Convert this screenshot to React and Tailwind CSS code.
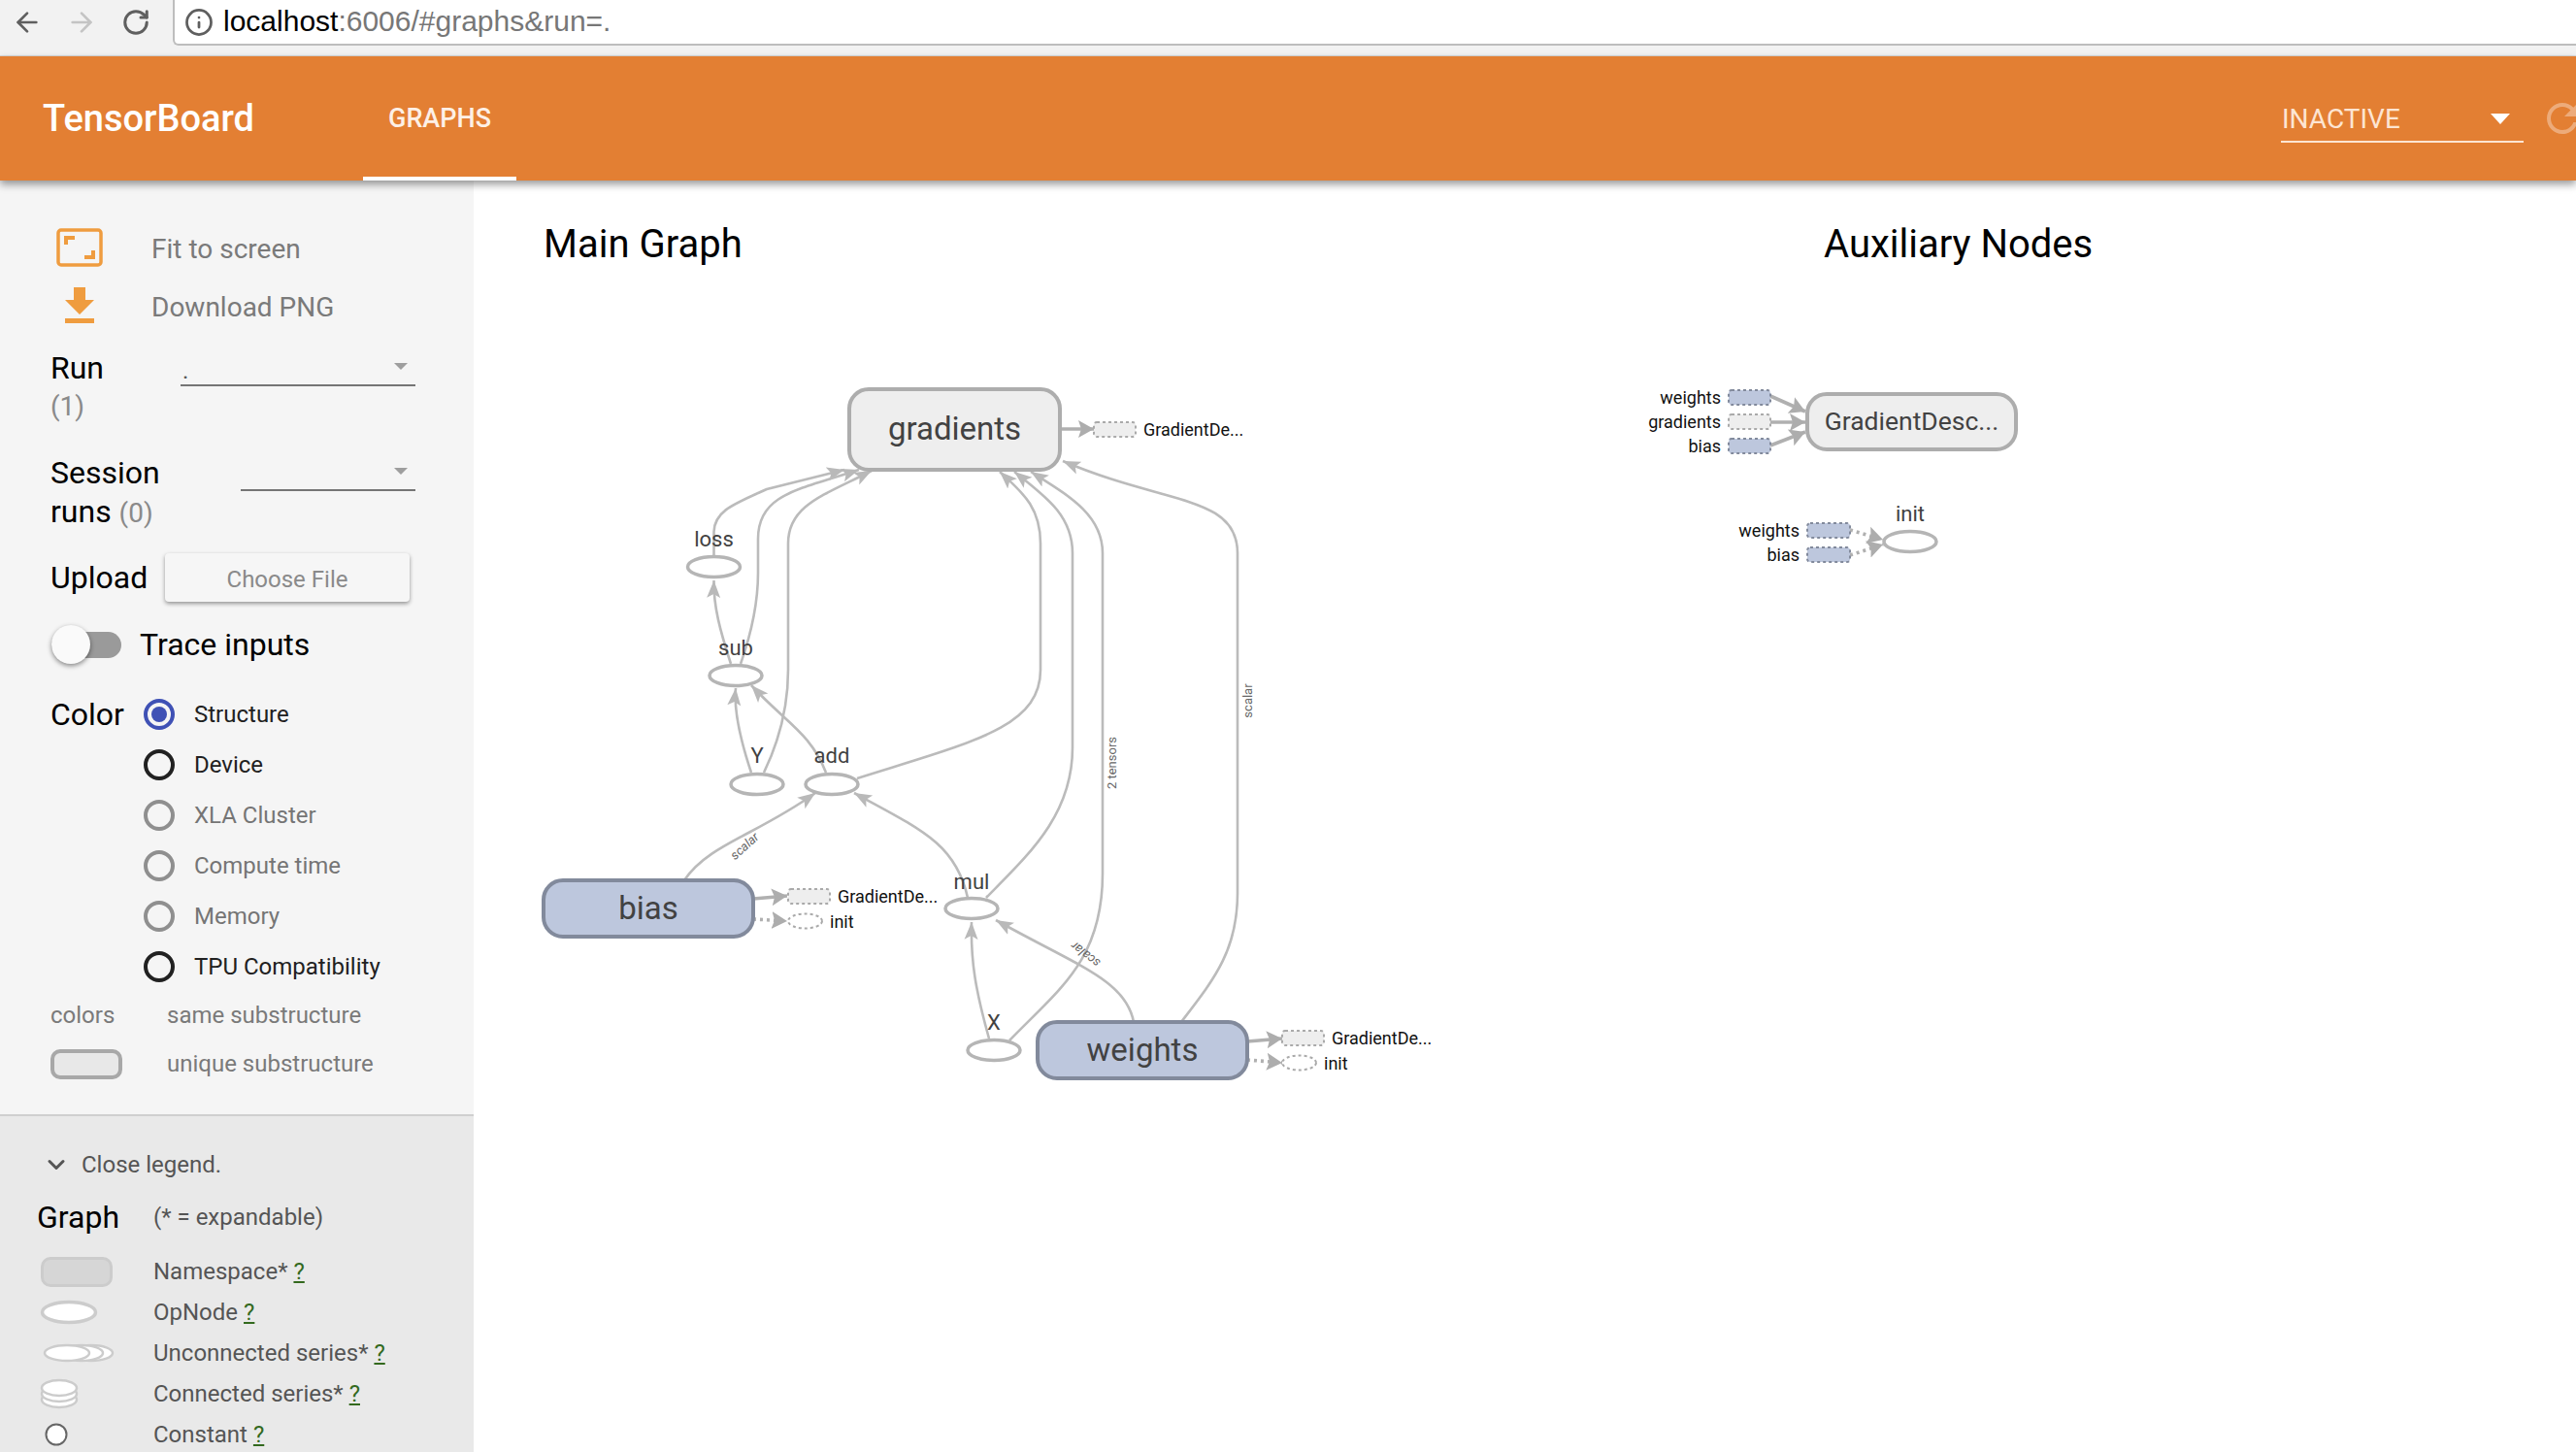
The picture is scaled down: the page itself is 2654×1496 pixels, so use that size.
import { ArrowLeft, ArrowRight, RotateCw, Info, ChevronDown } from 'lucide-react';

const COLOR_OPTIONS = [
  { label: 'Structure', state: 'selected' },
  { label: 'Device', state: 'active' },
  { label: 'XLA Cluster', state: 'disabled' },
  { label: 'Compute time', state: 'disabled' },
  { label: 'Memory', state: 'disabled' },
  { label: 'TPU Compatibility', state: 'active' },
];

const EDGES = [
  'M735.5 573 L735.5 548 C736 525 760 518 790 504 L870 484',
  'M753 684 C742 650 735 625 735.5 598',
  'M763 684 C775 650 781 620 781 590 L781 555 C781 510 820 505 885 484',
  'M774 796 C762 760 756 730 758 709',
  'M787 796 C802 765 812 730 812 690 L812 560 C812 520 850 510 898 485',
  'M851 796 C835 755 810 745 774 706',
  'M883 802 C1000 765 1072 750 1072 690 L1072 560 C1072 520 1050 505 1030 486',
  'M1016 925 C1060 880 1105 840 1105 770 L1105 570 C1105 530 1075 510 1045 486',
  'M1040 1072 C1090 1020 1136 990 1136 900 L1136 570 C1136 530 1100 510 1062 486',
  'M1217 1053 C1250 1010 1275 980 1275 920 L1275 570 C1275 510 1200 520 1095 475',
  'M705 907 C730 870 780 860 840 817',
  'M997 925 C985 870 950 855 880 817',
  'M1019 1070 C1005 1020 1000 990 1001 950',
  'M1168 1053 C1160 1010 1110 995 1026 948',
];

const BOLD_EDGES = [
  'M1092 442 L1127 442',
  'M776 926 L811 923',
  'M1285 1073 L1321 1070',
  'M1824 408 L1860 424',
  'M1824 435 L1860 435',
  'M1824 459 L1860 445',
];

const DOTTED_EDGES = [
  'M776 947 L811 949',
  'M1285 1092 L1321 1095',
  'M1906 546 L1940 556',
  'M1906 572 L1940 561',
];

const OP_NODES = [
  { label: 'loss', cx: 735.5, cy: 584, ly: 555 },
  { label: 'sub', cx: 758, cy: 696, ly: 667 },
  { label: 'Y', cx: 780, cy: 808, ly: 778 },
  { label: 'add', cx: 857, cy: 808, ly: 778 },
  { label: 'mul', cx: 1001, cy: 936, ly: 908 },
  { label: 'X', cx: 1024, cy: 1082, ly: 1053 },
  { label: 'init', cx: 1968, cy: 558, ly: 529 },
];

const NAMESPACES = [
  { label: 'gradients', x: 875, y: 401, w: 217, h: 83, fill: '#eeeeee', stroke: '#adadad', size: 33 },
  { label: 'bias', x: 560, y: 907, w: 216, h: 58, fill: '#bdc7dd', stroke: '#828a9c', size: 33 },
  { label: 'weights', x: 1069, y: 1053, w: 216, h: 58, fill: '#bdc7dd', stroke: '#828a9c', size: 33 },
  { label: 'GradientDesc...', x: 1862, y: 406, w: 215, h: 57, fill: '#eeeeee', stroke: '#adadad', size: 26.5 },
];

const STUBS = [
  { x: 1127, y: 435, w: 43, fill: '#eeeeee', stroke: '#aaaaaa', label: 'GradientDe...', tx: 1178, anchor: 'start' },
  { x: 812, y: 916, w: 43, fill: '#eeeeee', stroke: '#aaaaaa', label: 'GradientDe...', tx: 863, anchor: 'start' },
  { x: 1321, y: 1062, w: 43, fill: '#eeeeee', stroke: '#aaaaaa', label: 'GradientDe...', tx: 1372, anchor: 'start' },
  { x: 1781, y: 402, w: 43, fill: '#bdc7dd', stroke: '#828a9c', label: 'weights', tx: 1773, anchor: 'end' },
  { x: 1781, y: 427, w: 43, fill: '#eeeeee', stroke: '#aaaaaa', label: 'gradients', tx: 1773, anchor: 'end' },
  { x: 1781, y: 452, w: 43, fill: '#bdc7dd', stroke: '#828a9c', label: 'bias', tx: 1773, anchor: 'end' },
  { x: 1862, y: 539, w: 44, fill: '#bdc7dd', stroke: '#828a9c', label: 'weights', tx: 1854, anchor: 'end' },
  { x: 1862, y: 564, w: 44, fill: '#bdc7dd', stroke: '#828a9c', label: 'bias', tx: 1854, anchor: 'end' },
];

const STUB_OPS = [
  { cx: 829.5, cy: 949, label: 'init', tx: 855 },
  { cx: 1338.5, cy: 1095, label: 'init', tx: 1364 },
];

const EDGE_LABELS = [
  { text: 'scalar', x: 770, y: 875, rotate: -42, italic: true },
  { text: 'scalar', x: 1121, y: 980, rotate: 218, italic: true },
  { text: '2 tensors', x: 1150, y: 786, rotate: -90 },
  { text: 'scalar', x: 1290, y: 722, rotate: -90 },
];

function Radio({ state }) {
  const ring = state === 'selected' ? 'border-[#3f51b5]' : state === 'active' ? 'border-[#212121]' : 'border-[#8f8f8f]';
  return (
    <span className={`flex h-8 w-8 shrink-0 items-center justify-center rounded-full border-4 ${ring}`}>
      {state === 'selected' && <span className="h-4 w-4 rounded-full bg-[#3f51b5]" />}
    </span>
  );
}

function HelpMark() {
  return <span className="text-[#33691e] underline">?</span>;
}

function LegendRow({ icon, children }) {
  return (
    <div className="flex h-[42px] items-center">
      <div className="flex w-[158px] shrink-0 items-center pl-[41px]">{icon}</div>
      <span className="text-[24px] text-[#555555]">{children}</span>
    </div>
  );
}

function GraphCanvas() {
  return (
    <svg className="block" width="2166" height="1206" viewBox="488 290 2166 1206">
      <defs>
        <marker id="head" markerUnits="userSpaceOnUse" markerWidth="20" markerHeight="16" refX="18" refY="8" orient="auto">
          <path d="M0 1 L18 8 L0 15 L4 8 Z" fill="#b9b9b9" />
        </marker>
        <marker id="head-bold" markerUnits="userSpaceOnUse" markerWidth="20" markerHeight="20" refX="16" refY="10" orient="auto">
          <path d="M0 1 L16 10 L0 19 L3 10 Z" fill="#adadad" />
        </marker>
      </defs>

      {EDGES.map((d, i) => (
        <path key={i} d={d} fill="none" stroke="#bbbbbb" strokeWidth="2.6" markerEnd="url(#head)" />
      ))}
      {BOLD_EDGES.map((d, i) => (
        <path key={i} d={d} fill="none" stroke="#b0b0b0" strokeWidth="3.6" markerEnd="url(#head-bold)" />
      ))}
      {DOTTED_EDGES.map((d, i) => (
        <path key={i} d={d} fill="none" stroke="#b0b0b0" strokeWidth="3.6" strokeDasharray="3 4" markerEnd="url(#head-bold)" />
      ))}

      {OP_NODES.map(n => (
        <g key={n.label}>
          <ellipse cx={n.cx} cy={n.cy} rx="27" ry="10.5" fill="#ffffff" stroke="#b5b5b5" strokeWidth="3.5" />
          <text x={n.cx} y={n.ly + 8} textAnchor="middle" fontSize="22" fill="#424242">{n.label}</text>
        </g>
      ))}

      {NAMESPACES.map(n => (
        <g key={n.label}>
          <rect x={n.x} y={n.y} width={n.w} height={n.h} rx="20" fill={n.fill} stroke={n.stroke} strokeWidth="4" />
          <text x={n.x + n.w / 2} y={n.y + n.h / 2 + n.size * 0.33} textAnchor="middle" fontSize={n.size} fill="#424242">{n.label}</text>
        </g>
      ))}

      {STUBS.map((s, i) => (
        <g key={i}>
          <rect x={s.x} y={s.y} width={s.w} height="15" rx="3" fill={s.fill} stroke={s.stroke} strokeWidth="2" strokeDasharray="3 3" />
          <text x={s.tx} y={s.y + 14} textAnchor={s.anchor} fontSize="18" fill="#111111">{s.label}</text>
        </g>
      ))}
      {STUB_OPS.map((s, i) => (
        <g key={i}>
          <ellipse cx={s.cx} cy={s.cy} rx="17.5" ry="7.5" fill="#ffffff" stroke="#aaaaaa" strokeWidth="2" strokeDasharray="3 3" />
          <text x={s.tx} y={s.cy + 7} fontSize="18" fill="#111111">{s.label}</text>
        </g>
      ))}

      {EDGE_LABELS.map((l, i) => (
        <text
          key={i}
          x={l.x}
          y={l.y}
          textAnchor="middle"
          fontSize="13"
          fontStyle={l.italic ? 'italic' : 'normal'}
          fill="#666666"
          transform={`rotate(${l.rotate} ${l.x} ${l.y})`}
        >
          {l.text}
        </text>
      ))}
    </svg>
  );
}

export default function App() {
  return (
    <div className="flex h-[1496px] w-[2654px] flex-col overflow-hidden bg-white font-['Roboto',sans-serif]">
      {/* Browser chrome */}
      <div className="flex h-[58px] shrink-0 items-start border-b border-[#d8d8d8] bg-[#f2f2f2]">
        <div className="flex h-[46px] w-[178px] shrink-0 items-center pl-[12px]">
          <ArrowLeft size={32} strokeWidth={2} className="text-[#5f5f5f]" />
          <ArrowRight size={32} strokeWidth={2} className="ml-[24px] text-[#c4c4c4]" />
          <RotateCw size={30} strokeWidth={2.4} className="ml-[25px] text-[#5f5f5f]" />
        </div>
        <div className="flex h-[47px] flex-1 items-center rounded-bl-[6px] border-b-2 border-l-2 border-[#bdbdbd] bg-white pl-[10px]">
          <Info size={30} strokeWidth={2.2} className="text-[#5f5f5f]" />
          <span className="ml-[10px] -mt-[2px] font-['Liberation_Sans',sans-serif] text-[30px] leading-none text-black">
            localhost<span className="text-[#777777]">:6006/#graphs&amp;run=.</span>
          </span>
        </div>
      </div>

      {/* Toolbar */}
      <div className="relative z-10 flex h-[128px] shrink-0 items-stretch overflow-hidden bg-[#e37f33] shadow-[0_4px_8px_rgba(0,0,0,0.4)]">
        <div className="flex w-[374px] shrink-0 items-center pl-[44px] text-[38px] font-medium text-white">TensorBoard</div>
        <div className="flex w-[158px] shrink-0 items-center justify-center border-b-4 border-white pt-[4px] text-[27px] font-medium text-[#fdf0e6]">GRAPHS</div>
        <div className="ml-[1818px] flex w-[250px] shrink-0 items-center">
          <div className="mt-[6px] flex h-[44px] w-full items-center justify-between border-b-2 border-[#fde5d2] pb-[3px] pl-[1px] pr-[14px] text-[28px] text-[#fde5d2]">
            <span>INACTIVE</span>
            <span className="h-0 w-0 border-x-[10px] border-t-[11px] border-x-transparent border-t-white" />
          </div>
        </div>
        <div className="ml-[16px] flex shrink-0 items-center">
          <svg width="48" height="48" viewBox="0 0 24 24" fill="#ffffff" fillOpacity="0.35">
            <path d="M17.65 6.35C16.2 4.9 14.21 4 12 4c-4.42 0-7.99 3.58-7.99 8s3.57 8 7.99 8c3.73 0 6.84-2.55 7.73-6h-2.08c-.82 2.33-3.04 4-5.65 4-3.31 0-6-2.69-6-6s2.69-6 6-6c1.66 0 3.14.69 4.22 1.78L13 11h7V4l-2.35 2.35z" />
          </svg>
        </div>
      </div>

      <div className="flex min-h-0 flex-1">
        {/* Sidebar */}
        <aside className="flex w-[488px] shrink-0 flex-col bg-[#f5f5f5]">
          <div className="h-[962px] shrink-0 pl-[52px] pr-[60px] pt-[41px]">
            <div className="flex h-[59px] items-center text-[28px] text-[#7a7a7a]">
              <div className="flex w-[104px] shrink-0 items-center pl-[6px]">
                <svg width="48" height="40" viewBox="0 0 48 40" className="-mt-[3px]">
                  <rect x="2" y="2" width="44" height="36" rx="3" fill="none" stroke="#ef9c3f" strokeWidth="3.5" />
                  <path d="M8 17 V8 H19 V12 H12 V17 Z M40 23 V32 H29 V28 H36 V23 Z" fill="#ef9c3f" />
                </svg>
              </div>
              <span>Fit to screen</span>
            </div>
            <div className="flex h-[59px] items-center text-[28px] text-[#7a7a7a]">
              <div className="flex w-[104px] shrink-0 items-center pl-[15px]">
                <svg width="30" height="37" viewBox="0 0 30 37" className="-mt-[3px]">
                  <path d="M9 0 H21 V13 H30 L15 28 L0 13 H9 Z M0 32 H30 V37 H0 Z" fill="#ef9c3f" />
                </svg>
              </div>
              <span className="pt-[2px]">Download PNG</span>
            </div>

            <div className="relative mt-[14px] flex h-[80px]">
              <div className="w-[134px] shrink-0 text-[32px] leading-[40px] text-black">
                Run
                <div className="text-[28px] text-[#8a8a8a]">(1)</div>
              </div>
              <div className="flex h-[39px] w-[242px] shrink-0 items-center justify-between border-b-2 border-[#757575] pl-[2px] pr-[8px]">
                <span className="mt-[8px] text-[24px] leading-none text-[#555555]">.</span>
                <span className="h-0 w-0 border-x-[7px] border-t-[7px] border-x-transparent border-t-[#9e9e9e]" />
              </div>
            </div>

            <div className="mt-[28px] flex h-[80px]">
              <div className="w-[196px] shrink-0 text-[32px] leading-[40px] text-black">
                Session
                <div>
                  runs <span className="text-[28px] text-[#8a8a8a]">(0)</span>
                </div>
              </div>
              <div className="flex h-[39px] w-[180px] shrink-0 items-center justify-end border-b-2 border-[#757575] pr-[8px]">
                <span className="h-0 w-0 border-x-[7px] border-t-[7px] border-x-transparent border-t-[#9e9e9e]" />
              </div>
            </div>

            <div className="mt-[23px] flex h-[50px] items-center">
              <span className="w-[118px] shrink-0 text-[32px] text-black">Upload</span>
              <div className="flex h-[50px] w-[252px] shrink-0 items-center justify-center rounded-[4px] bg-[#f6f6f6] pt-[4px] text-[24px] text-[#8a8a8a] shadow-[0_2px_4px_rgba(0,0,0,0.4)]">
                Choose File
              </div>
            </div>

            <div className="mt-[24px] flex h-[40px] items-center">
              <div className="relative ml-[1px] h-[27px] w-[72px] shrink-0 rounded-full bg-[#9a9a9a]">
                <span className="absolute left-0 top-[-7px] h-[40px] w-[40px] rounded-full bg-[#fafafa] shadow-[0_2px_5px_rgba(0,0,0,0.45)]" />
              </div>
              <span className="ml-[19px] text-[32px] text-black">Trace inputs</span>
            </div>

            <div className="mt-[26px] flex">
              <span className="flex h-[52px] w-[96px] shrink-0 items-center text-[32px] text-black">Color</span>
              <div>
                {COLOR_OPTIONS.map(o => (
                  <div key={o.label} className="flex h-[52px] items-center">
                    <Radio state={o.state} />
                    <span className={`ml-[20px] text-[24px] ${o.state === 'disabled' ? 'text-[#757575]' : 'text-[#212121]'}`}>{o.label}</span>
                  </div>
                ))}
              </div>
            </div>

            <div className="mt-[4px] flex h-[40px] items-center text-[24px] text-[#7a7a7a]">
              <span className="w-[120px] shrink-0">colors</span>
              same substructure
            </div>
            <div className="mt-[10px] flex h-[40px] items-center text-[24px] text-[#7a7a7a]">
              <span className="mr-[46px] h-[31px] w-[74px] shrink-0 rounded-[10px] border-4 border-[#a8a8a8] bg-[#e8e8e8]" />
              unique substructure
            </div>
          </div>

          {/* Legend */}
          <div className="flex-1 border-t-2 border-[#cfcfcf] bg-[#e9e9e9] pt-[30px]">
            <div className="flex h-[40px] items-center pl-[44px] text-[24px] text-[#555555]">
              <ChevronDown size={28} strokeWidth={2.6} className="mr-[12px] text-[#555555]" />
              Close legend.
            </div>
            <div className="mt-[14px] flex h-[40px] items-center pl-[38px]">
              <span className="w-[120px] shrink-0 text-[32px] text-black">Graph</span>
              <span className="text-[24px] text-[#555555]">(* = expandable)</span>
            </div>
            <div className="mt-[15px]">
              <LegendRow icon={<span className="ml-[1px] block h-[31px] w-[74px] rounded-[10px] border-[3px] border-[#cccccc] bg-[#d6d6d6]" />}>
                Namespace* <HelpMark />
              </LegendRow>
              <LegendRow icon={
                <svg width="60" height="26" viewBox="0 0 60 26">
                  <ellipse cx="30" cy="13" rx="27.5" ry="10.5" fill="#ffffff" stroke="#cccccc" strokeWidth="3.5" />
                </svg>
              }>
                OpNode <HelpMark />
              </LegendRow>
              <LegendRow icon={
                <svg className="ml-[3px]" width="74" height="20" viewBox="0 0 74 20">
                  <ellipse cx="50" cy="10" rx="22" ry="8" fill="#ffffff" stroke="#cccccc" strokeWidth="2.5" />
                  <ellipse cx="40" cy="10" rx="22" ry="8" fill="#ffffff" stroke="#cccccc" strokeWidth="2.5" />
                  <ellipse cx="25" cy="10" rx="23" ry="8" fill="#ffffff" stroke="#cccccc" strokeWidth="2.5" />
                </svg>
              }>
                Unconnected series* <HelpMark />
              </LegendRow>
              <LegendRow icon={
                <svg width="40" height="32" viewBox="0 0 40 32">
                  <ellipse cx="20" cy="22" rx="18" ry="8" fill="#ffffff" stroke="#cccccc" strokeWidth="2.5" />
                  <ellipse cx="20" cy="16" rx="18" ry="8" fill="#ffffff" stroke="#cccccc" strokeWidth="2.5" />
                  <ellipse cx="20" cy="10" rx="18" ry="8" fill="#ffffff" stroke="#cccccc" strokeWidth="2.5" />
                </svg>
              }>
                Connected series* <HelpMark />
              </LegendRow>
              <LegendRow icon={
                <svg className="ml-[5px]" width="24" height="24" viewBox="0 0 24 24">
                  <circle cx="12" cy="12" r="10.5" fill="#ffffff" stroke="#666666" strokeWidth="2" />
                </svg>
              }>
                Constant <HelpMark />
              </LegendRow>
            </div>
          </div>
        </aside>

        {/* Graph area */}
        <main className="min-w-0 flex-1">
          <div className="flex h-[104px] items-end pb-[13px] pl-[72px] text-[40px] leading-[50px] text-black">
            <span className="w-[1319px] shrink-0">Main Graph</span>
            <span>Auxiliary Nodes</span>
          </div>
          <GraphCanvas />
        </main>
      </div>
    </div>
  );
}
